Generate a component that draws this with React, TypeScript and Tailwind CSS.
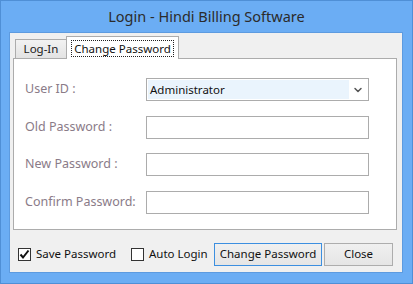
import { ChevronDown } from 'lucide-react';

const font = { fontFamily: '"Noto Sans", "Open Sans", sans-serif' };

function Field({ label }: { label: string }) {
    return (
        <div className="flex items-center h-[23px]">
            <div className="w-[121px] text-[12.5px] text-[#8a7b88] whitespace-nowrap">{label}</div>
            <div className="w-[223px] h-[23px] bg-white border border-[#acacac]"></div>
        </div>
    );
}

function CheckBox({ checked, label }: { checked?: boolean; label: string }) {
    return (
        <div className="flex items-center gap-[5px]">
            <div className="w-[13px] h-[13px] shrink-0 bg-white border border-[#333] flex items-center justify-center">
                {checked && (
                    <svg width="11" height="11" viewBox="0 0 11 11">
                        <path d="M1.5 5.5 L4 8.5 L9.5 1.5" stroke="#111" strokeWidth="2" fill="none" />
                    </svg>
                )}
            </div>
            <span className="text-[11.5px] text-[#111] whitespace-nowrap">{label}</span>
        </div>
    );
}

export default function App() {
    return (
        <div style={font} className="w-[413px] h-[284px] bg-[#6badf4] border border-[#4f8fd6] flex flex-col">
            {/* Title bar */}
            <div className="h-[31px] flex items-center justify-center text-[14.5px] text-[#2b2b2b]">
                Login - Hindi Billing Software
            </div>

            {/* Client area */}
            <div className="ml-[8px] mr-[9px] h-[241px] bg-[#f0f0f0] border border-[#5d9be0] pt-[3px] pl-[3px] pr-[5px]">
                {/* Tabs */}
                <div className="flex items-end h-[22px] pl-[2px]">
                    <div className="h-[19px] w-[52px] border border-b-0 border-[#acacac] bg-gradient-to-b from-[#f2f2f2] to-[#e3e3e3] flex items-center justify-center text-[11.5px] text-[#1a1a1a]">
                        Log-In
                    </div>
                    <div className="relative z-10 -mb-px h-[23px] w-[113px] -ml-px border border-b-0 border-[#acacac] bg-white flex items-center justify-center">
                        <span className="text-[11.5px] text-[#111] border border-dotted border-[#222] px-[2px] leading-[15px] whitespace-nowrap">
                            Change Password
                        </span>
                    </div>
                </div>

                {/* Tab panel */}
                <div className="h-[172px] bg-white border border-[#acacac] pl-[11px] pt-[19px] flex flex-col gap-[15px]">
                    <div className="flex items-center h-[23px]">
                        <div className="w-[121px] text-[12.5px] text-[#8a7b88]">User ID :</div>
                        <div className="w-[223px] h-[23px] bg-white border border-[#acacac] flex items-center pl-px pr-[4px]">
                            <div className="w-[201px] h-[19px] bg-[#eaf4fd] text-[11.5px] text-[#111] flex items-center pl-[2px]">
                                Administrator
                            </div>
                            <ChevronDown className="ml-auto text-[#555]" size={12} strokeWidth={3} />
                        </div>
                    </div>
                    <Field label="Old Password :" />
                    <div className="-mt-px">
                        <Field label="New Password :" />
                    </div>
                    <Field label="Confirm Password:" />
                </div>

                {/* Bottom row */}
                <div className="flex items-center h-[32px] mt-[8px] pl-[5px]">
                    <div className="w-[113px] shrink-0">
                        <CheckBox checked label="Save Password" />
                    </div>
                    <div className="w-[83px] shrink-0">
                        <CheckBox label="Auto Login" />
                    </div>
                    <button className="shrink-0 w-[108px] h-[23px] border border-[#3c8fe0] bg-gradient-to-b from-[#f0f0f0] to-[#e5e5e5] text-[11.5px] text-[#111]">
                        Change Password
                    </button>
                    <button className="shrink-0 ml-[2px] w-[69px] h-[23px] border border-[#adadad] bg-gradient-to-b from-[#f0f0f0] to-[#e5e5e5] text-[11.5px] text-[#111]">
                        Close
                    </button>
                </div>
            </div>
        </div>
    );
}
